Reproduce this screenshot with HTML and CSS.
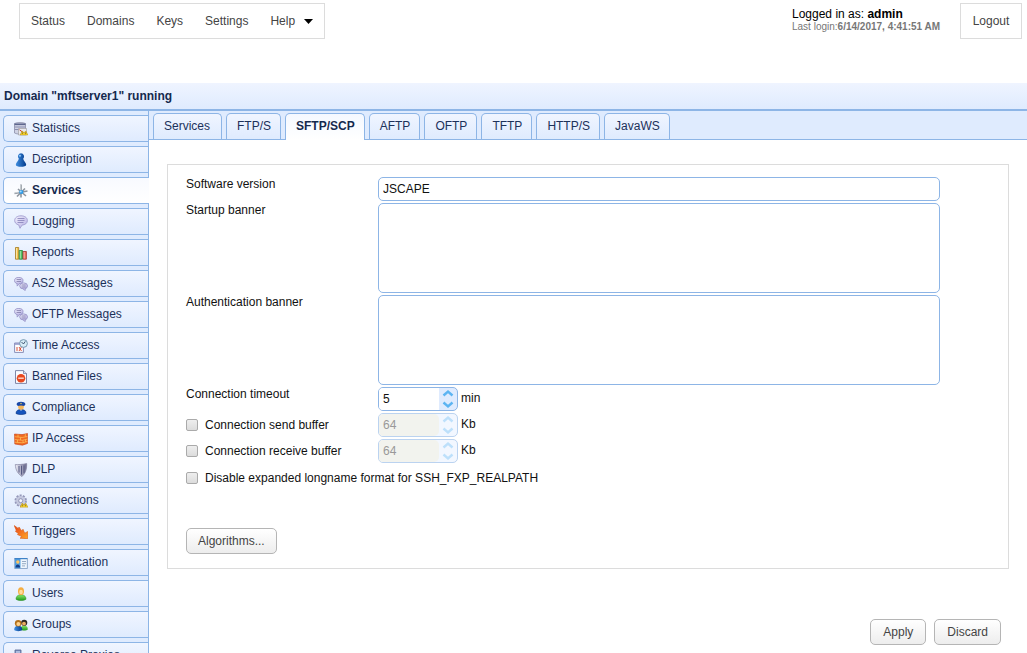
FILE: index.html
```html
<!DOCTYPE html>
<html lang="en">
<head>
<meta charset="utf-8">
<title>Domain "mftserver1"</title>
<link rel="stylesheet" href="styles.css">
</head>
<body>
<svg class="defs" aria-hidden="true">
  <defs>
    <linearGradient id="lilac" x1="0" y1="0" x2="1" y2="1"><stop offset="0" stop-color="#f4f2ff"/><stop offset="1" stop-color="#b2ade2"/></linearGradient>
    <linearGradient id="blue" x1="0" y1="0" x2="1" y2="0"><stop offset="0" stop-color="#3f8ee0"/><stop offset="1" stop-color="#023a8c"/></linearGradient>
    <linearGradient id="green" x1="0" y1="0" x2="0" y2="1"><stop offset="0" stop-color="#8ee86a"/><stop offset="1" stop-color="#1d9a1d"/></linearGradient>
    <linearGradient id="fire" x1="0" y1="0" x2="1" y2="1"><stop offset="0" stop-color="#e8401c"/><stop offset="1" stop-color="#ffa624"/></linearGradient>
    <linearGradient id="steel" x1="0" y1="0" x2="1" y2="0"><stop offset="0" stop-color="#f0f0fa"/><stop offset="1" stop-color="#68688c"/></linearGradient>
    <symbol id="bubble" viewBox="0 0 14 14">
      <path d="M7 .8C3.300.8.700 2.800.700 5.500c0 2.200 1.600 3.800 4 4.400L6 13.300l2-3.200c3.200-.2 5.400-2 5.400-4.600C13.400 2.800 10.700.8 7 .8z" fill="url(#lilac)" stroke="#a09cce" stroke-width=".9"/>
      <path d="M3.500 3.500h7M3.500 5.500h7M3.500 7.500h6" stroke="#8580b8" stroke-width=".8"/>
    </symbol>
    <symbol id="bubbles" viewBox="0 0 14 14">
      <ellipse cx="4.800" cy="3.600" rx="4.200" ry="3.100" fill="url(#lilac)" stroke="#9692c6" stroke-width=".9"/>
      <path d="M3 6.300l.2 2.800 2.400-2.600" fill="#c5c1ea" stroke="#9692c6" stroke-width=".8"/>
      <path d="M2.600 2.500h4.500M2.600 4.500h4.500" stroke="#77739f" stroke-width=".7"/>
      <ellipse cx="9.600" cy="8.900" rx="3.900" ry="3" fill="url(#lilac)" stroke="#9692c6" stroke-width=".9"/>
      <path d="M9 11.800l2.200 1.800.2-2.300" fill="#c5c1ea" stroke="#9692c6" stroke-width=".8"/>
      <path d="M7.500 8h4.200M7.500 10h4.200" stroke="#77739f" stroke-width=".7"/>
    </symbol>
    <symbol id="warn" viewBox="0 0 8 5">
      <path d="M0 4.600L2.300.4l1.700 2.200L5.700.4 8 4.600z" fill="#f8d42c" stroke="#b38a12" stroke-width=".5"/>
      <path d="M2.400 1.800v1.800M5.600 1.800v1.800" stroke="#5e4c10" stroke-width=".6"/>
    </symbol>
    <symbol id="chevrons" viewBox="0 0 18 22">
      <path d="M4.500 7.500L9 3.500l4.500 4M4.500 14.500l4.500 4 4.500-4" fill="none" stroke="#5cb4f2" stroke-width="2.400"/>
    </symbol>
  </defs>
</svg>

<header class="topbar">
  <nav class="menu">
    <a href="#">Status</a>
    <a href="#">Domains</a>
    <a href="#">Keys</a>
    <a href="#">Settings</a>
    <a href="#">Help<svg class="caret" viewBox="0 0 9 5"><path d="M0 0h9L4.500 5z"/></svg></a>
  </nav>
  <div class="session">
    <div class="who">
      <div>Logged in as: <b>admin</b></div>
      <div class="last">Last login:<b>6/14/2017, 4:41:51 AM</b></div>
    </div>
    <button class="logout" type="button">Logout</button>
  </div>
</header>

<h1 class="title">Domain "mftserver1" running</h1>

<div class="workspace">
  <nav class="side">
    <a href="#"><svg class="icon" viewBox="0 0 14 14"><path d="M.5 1.500C3 .3 9 .3 11.500 1.500v9.500C9 12.500 3 12.500.5 11z" fill="#cfd2e4" stroke="#8c8ea8" stroke-width=".8"/><path d="M.5 2.300h11" stroke="#5d668e" stroke-width="1.600"/><path d="M.8 5h10.500M.8 7.500h10.500" stroke="#8286a8" stroke-width=".9"/><path d="M4.500 13V6.500h8V13z" fill="#e8e8ee" stroke="#999" stroke-width=".6"/><path d="M5.500 7.800l4 3" stroke="#c8402c"/><use href="#warn" x="6" y="8.500" width="8" height="5"/></svg>Statistics</a>
    <a href="#"><svg class="icon" viewBox="0 0 14 14"><path d="M7 .3a3.200 3.200 0 0 1 2.200 5.400c.2 2.200 3 3.800 3 6 0 1.400-2.500 2-5.200 2s-5.200-.6-5.200-2c0-2.200 2.800-3.800 3-6A3.200 3.200 0 0 1 7 .3z" fill="url(#blue)"/><ellipse cx="6" cy="2.700" rx="1.200" ry="1" fill="#86c0f5"/></svg>Description</a>
    <a href="#" class="current" aria-current="page"><svg class="icon" viewBox="0 0 14 14"><path d="M7 .5v13M.5 9.500L13.500 7M3 12.500l8-8M4 5l8 7" stroke="#8e959e" stroke-width="1.600"/><path d="M6.600 1v5M.8 9l5-1.200" stroke="#d0d5da" stroke-width=".8"/><circle cx="7.300" cy="8" r="2.100" fill="#2d9be8"/><circle cx="6.800" cy="7.500" r=".9" fill="#a5dcff"/></svg>Services</a>
    <a href="#"><svg class="icon"><use href="#bubble"/></svg>Logging</a>
    <a href="#"><svg class="icon" viewBox="0 0 14 14"><path d="M1.500 1.500h3.200v11.700H1.500z" fill="#f3c54a" stroke="#a47a22" stroke-width=".8"/><path d="M5.300 4.500h3.200v8.700H5.300z" fill="#4fc464" stroke="#23863a" stroke-width=".8"/><path d="M9.100 5.500h3.300v7.700H9.100z" fill="#ef7260" stroke="#a33a30" stroke-width=".8"/><path d="M2.500 2v10.500M6.300 5v7.500M10.100 6v6.500" stroke="#fff" stroke-opacity=".65" stroke-width=".8"/></svg>Reports</a>
    <a href="#"><svg class="icon"><use href="#bubbles"/></svg>AS2 Messages</a>
    <a href="#"><svg class="icon"><use href="#bubbles"/></svg>OFTP Messages</a>
    <a href="#"><svg class="icon" viewBox="0 0 14 14"><path d="M.6 4h8.800v9.400H.6z" fill="#fff" stroke="#7d82b0" stroke-width=".9"/><path d="M.6 5h8.800" stroke="#8f94c8" stroke-width="1.500"/><path d="M3 8v4M5 8l2.500 4M7.500 8L5 12" stroke="#dc5038" stroke-width="1"/><circle cx="9.500" cy="4.500" r="3.900" fill="#d7edf7" stroke="#6b8ea8" stroke-width=".9"/><path d="M7.500 3l2 2L11.300 2.400" fill="none" stroke="#324a66" stroke-width=".9"/></svg>Time Access</a>
    <a href="#"><svg class="icon" viewBox="0 0 14 14"><path d="M1.500.6h8l3 3v9.800h-11z" fill="#fafbff" stroke="#707b9e" stroke-width=".9"/><path d="M9.500.6v3h3" fill="#d5dbee" stroke="#707b9e" stroke-width=".8"/><circle cx="7" cy="8.200" r="4.300" fill="#e8481f"/><path d="M4.200 8.200h5.600" stroke="#ffd9c9" stroke-width="1.400"/></svg>Banned Files</a>
    <a href="#"><svg class="icon" viewBox="0 0 14 14"><path d="M2 12.500C2 9.500 4 8.500 7 8.500s5 1 5 4c-2 1.400-8 1.400-10 0z" fill="#1554bd" stroke="#0a3280" stroke-width=".6"/><circle cx="7" cy="5.800" r="2.900" fill="#f6b85c"/><path d="M2.500 3.200C3.300 0 10.700 0 11.500 3.200L10.200 5C8 4.200 6 4.200 3.800 5z" fill="#1a48a6"/><circle cx="7" cy="2.500" r=".7" fill="#ffd94a"/><path d="M6.200 8.800l.8 1.200.8-1.200" fill="#fff"/></svg>Compliance</a>
    <a href="#"><svg class="icon" viewBox="0 0 14 14"><path d="M.5 2l7.500.6L13.500 1.500v10L8.500 13.200.8 12z" fill="#f06a22" stroke="#c7431a" stroke-width=".6"/><path d="M.7 4.700l7.500.8 5.200-1M.8 7.500l7.500.8 5.200-1.200M1 10.200l7.500.6 5-1.400M4 2.500v2.500M6.500 5.500V8M3.500 8v2.500M9 8.300v2.500M11.300 2v2.700M11.500 7.500v2.300" fill="none" stroke="#ffc45a" stroke-width=".7"/></svg>IP Access</a>
    <a href="#"><svg class="icon" viewBox="0 0 14 14"><path d="M1.300 1.500C4 1.800 8 1.500 12.700.6c.3 6-1.500 10-4.700 12.900-4-2.500-6.500-6.500-6.700-12z" fill="url(#steel)" stroke="#8585a2" stroke-width=".7"/><path d="M5 3v6.500M7.500 2.700v9M10 2.400v7.500" stroke="#565a82" stroke-width="1"/></svg>DLP</a>
    <a href="#"><svg class="icon" viewBox="0 0 14 14"><circle cx="6.700" cy="6.700" r="5.200" fill="#c9cce2" stroke="#9598ba" stroke-width="2" stroke-dasharray="2 1.260"/><circle cx="6.700" cy="6.700" r="4.500" fill="#c4c8de"/><circle cx="6.700" cy="6.700" r="2" fill="#f6f7ff" stroke="#8084a8" stroke-width=".8"/><use href="#warn" x="6" y="8.700" width="8" height="5"/></svg>Connections</a>
    <a href="#"><svg class="icon" viewBox="0 0 14 14"><path d="M.2.500L4.300 3.500 5 2l2.700 4L9 4.200l1.700 4L13.700 6.500v7.200L6 13.200l2-1.600-4.500-2 .8-1L1.300 6.200l1-.8z" fill="url(#fire)" stroke="#d95a14" stroke-width=".6"/></svg>Triggers</a>
    <a href="#"><svg class="icon" viewBox="0 0 14 14"><path d="M.6 2.500h12.800v10H.6z" fill="#eef5fc" stroke="#7c9bc0" stroke-width=".8"/><path d="M1 2.800h5.500v9.500H1z" fill="#4f9ee2"/><path d="M.6 2.600h12.800" stroke="#3e82c8" stroke-width="1.200"/><circle cx="3.800" cy="6" r="1.700" fill="#ffc35c"/><path d="M1.500 11.500c0-4 4.600-4 4.600 0z" fill="#173e86"/><path d="M8 5.500h4M8 7.700h4M8 9.900h3" stroke="#8198b5" stroke-width=".8"/></svg>Authentication</a>
    <a href="#"><svg class="icon" viewBox="0 0 14 14"><path d="M2 12.300c0-3.500 2.500-4.500 5-4.500s5 1 5 4.500c-2 1.700-8 1.700-10 0z" fill="url(#green)" stroke="#2a8d24" stroke-width=".5"/><ellipse cx="7" cy="4.200" rx="3" ry="3.900" fill="#f5ad42"/><ellipse cx="7" cy="5" rx="1.800" ry="2.300" fill="#ffdb9d"/></svg>Users</a>
    <a href="#"><svg class="icon" viewBox="0 0 14 14"><path d="M6.500 11.500c0-3 1.500-4 3.700-4s3.600 1 3.600 4c-1.500 1.300-5.800 1.300-7.300 0z" fill="url(#green)"/><circle cx="10.200" cy="4.800" r="3.100" fill="#302b25"/><circle cx="10" cy="5.700" r="1.900" fill="#e9ad62"/><path d="M.2 12c0-3.200 1.800-4.200 4.100-4.200s4 1 4 4.200c-1.500 1.500-6.600 1.500-8.100 0z" fill="url(#blue)"/><circle cx="4.200" cy="5.200" r="3.300" fill="#b3701a"/><circle cx="4.400" cy="5.900" r="2" fill="#ffd18a"/></svg>Groups</a>
    <a href="#"><svg class="icon" viewBox="0 0 14 14"><path d="M1 1h6v10H1z" fill="#7f93c4" stroke="#55668f" stroke-width=".8"/><path d="M2 3h4M2 5h4" stroke="#dfe6fa"/><path d="M6 8h7v5H6z" fill="#bcd0f0" stroke="#5d7cb0"/></svg>Reverse Proxies</a>
  </nav>

  <main class="content">
    <nav class="tabs">
      <a href="#">Services</a>
      <a href="#">FTP/S</a>
      <a href="#" class="current" aria-current="page">SFTP/SCP</a>
      <a href="#">AFTP</a>
      <a href="#">OFTP</a>
      <a href="#">TFTP</a>
      <a href="#">HTTP/S</a>
      <a href="#">JavaWS</a>
    </nav>

    <form class="settings">
      <div class="panel">
        <div class="fields">
          <label for="version">Software version</label>
          <input class="box" id="version" type="text" value="JSCAPE">

          <label for="startup">Startup banner</label>
          <textarea class="box area" id="startup"></textarea>

          <label for="auth">Authentication banner</label>
          <textarea class="box area" id="auth"></textarea>

          <label for="timeout">Connection timeout</label>
          <div class="measure">
            <span class="spinner"><input id="timeout" type="number" value="5"><svg class="arrows"><use href="#chevrons"/></svg></span>
            <span class="unit">min</span>
          </div>

          <label class="check"><input type="checkbox">Connection send buffer</label>
          <div class="measure">
            <span class="spinner off"><input type="number" value="64" aria-label="Send buffer size" disabled><svg class="arrows"><use href="#chevrons"/></svg></span>
            <span class="unit">Kb</span>
          </div>

          <label class="check"><input type="checkbox">Connection receive buffer</label>
          <div class="measure">
            <span class="spinner off"><input type="number" value="64" aria-label="Receive buffer size" disabled><svg class="arrows"><use href="#chevrons"/></svg></span>
            <span class="unit">Kb</span>
          </div>

          <label class="check wide"><input type="checkbox">Disable expanded longname format for SSH_FXP_REALPATH</label>
        </div>
        <button class="btn" type="button">Algorithms...</button>
      </div>
      <div class="actions">
        <button class="btn" type="button">Apply</button>
        <button class="btn" type="button">Discard</button>
      </div>
    </form>
  </main>
</div>
</body>
</html>
```
FILE: styles.css
```css
* {
  box-sizing: border-box;
}

body {
  margin: 0;
  height: 100vh;
  overflow: hidden;
  display: flex;
  flex-direction: column;
  background: #fff;
  color: #111;
  font: 12px/14px "Liberation Sans", Arial, sans-serif;
}

a {
  color: inherit;
  text-decoration: none;
}

input,
textarea,
button {
  margin: 0;
  font: inherit;
  color: inherit;
}

.defs {
  position: absolute;
  width: 0;
  height: 0;
}

/* Top bar */
.topbar {
  flex: none;
  display: flex;
  justify-content: space-between;
  align-items: flex-start;
  padding: 3px 5px 44px 19px;
}

.menu {
  display: flex;
  border: 1px solid #dcdcdc;
  color: #444;
}

.menu a {
  display: flex;
  align-items: center;
  padding: 10px 11px;
}

.caret {
  width: 9px;
  height: 5px;
  margin-left: 9px;
  fill: #000;
}

.session {
  display: flex;
  gap: 12px;
}

.who {
  padding-top: 4px;
  color: #000;
  min-width: 156px;
}

.last {
  color: #777;
  font-size: 10px;
  line-height: 12px;
}

.logout {
  min-width: 62px;
  padding: 10px 11px;
  border: 1px solid #dcdcdc;
  background: #fff;
  color: #444;
}

/* Domain title */
.title {
  flex: none;
  margin: 0;
  padding: 6px 4px;
  border-bottom: 2px solid #8db5e6;
  background: linear-gradient(#eff4ff, #dfebfe);
  color: #15294e;
  font-size: 12px;
  line-height: 14px;
}

.workspace {
  flex: 1;
  min-height: 0;
  display: flex;
}

/* Side navigation */
.side {
  flex: none;
  width: 148px;
  padding: 4px 0 0 3px;
  display: flex;
  flex-direction: column;
  gap: 4px;
  background: #dfebfe;
  color: #1c315a;
}

.side a {
  flex: none;
  display: flex;
  align-items: center;
  gap: 4px;
  height: 27px;
  padding: 0 0 2px 10px;
  border: 1px solid #8db5e6;
  border-right: 0;
  border-radius: 5px 0 0 5px;
  background: linear-gradient(#f0f5ff, #dfebfe);
}

.side .current {
  position: relative;
  margin-right: -1px;
  background: linear-gradient(#f8faff, #fff);
  color: #15294e;
  font-weight: bold;
}

.icon {
  width: 14px;
  height: 14px;
  margin-top: 2px;
}

/* Content and tabs */
.content {
  flex: 1;
  min-width: 0;
  border-left: 1px solid #8db5e6;
}

.tabs {
  display: flex;
  gap: 4px;
  padding: 2px 4px 0;
  border-bottom: 1px solid #8db5e6;
  background: #dfebfe;
  color: #1c315a;
}

.tabs a {
  height: 26px;
  padding: 5px 9px 5px 10px;
  border: 1px solid #8db5e6;
  border-bottom: 0;
  border-radius: 5px 5px 0 0;
  background: linear-gradient(#f0f5ff, #dfebfe);
}

.tabs a:first-child {
  min-width: 69px;
}

.tabs .current {
  height: 27px;
  margin-bottom: -1px;
  background: linear-gradient(#f4f8ff, #fff);
  color: #15294e;
  font-weight: bold;
}

/* Settings form */
.settings {
  padding: 24px 18px 0;
}

.panel {
  padding: 12px 68px 14px 18px;
  border: 1px solid #dcdcdc;
}

.fields {
  display: grid;
  grid-template-columns: 192px 1fr;
  row-gap: 2px;
  margin-bottom: 43px;
}

.box {
  width: 100%;
  height: 24px;
  padding: 0 4px;
  border: 1px solid #8db5e6;
  border-radius: 5px;
  background: #fff;
}

.area {
  display: block;
  height: 90px;
  padding: 4px;
  resize: none;
}

.measure {
  display: flex;
  gap: 3px;
}

.spinner {
  display: flex;
  width: 80px;
  height: 24px;
  border: 1px solid #8db5e6;
  border-radius: 5px;
  background: #dfebfe;
  overflow: hidden;
}

.spinner input {
  flex: 1;
  min-width: 0;
  padding: 0 4px;
  border: 0;
  background: #fff;
  appearance: textfield;
}

.spinner input::-webkit-inner-spin-button {
  appearance: none;
}

.arrows {
  width: 18px;
  height: 22px;
}

.off {
  border-color: #bbd3f0;
  background: #f2f7ff;
}

.spinner.off input {
  border-radius: 0 5px 5px 0;
  background: #f2f3ee;
  color: #999;
}

.off .arrows {
  opacity: .35;
}

.unit {
  padding-top: 4px;
}

.check {
  display: flex;
  align-items: center;
  gap: 7px;
}

.check input {
  appearance: none;
  width: 12px;
  height: 12px;
  border: 1px solid #aaa;
  border-radius: 2px;
  background: linear-gradient(#eee, #dcdcdc);
}

.wide {
  grid-column: 1 / -1;
  padding-top: 6px;
}

.btn {
  height: 26px;
  padding: 0 11px;
  border: 1px solid #b5b5b5;
  border-radius: 5px;
  background: linear-gradient(#fff, #ededed);
  color: #444;
}

.actions {
  display: flex;
  justify-content: flex-end;
  gap: 8px;
  padding: 50px 8px 0;
}

.actions .btn {
  padding: 0 12px;
}
```
